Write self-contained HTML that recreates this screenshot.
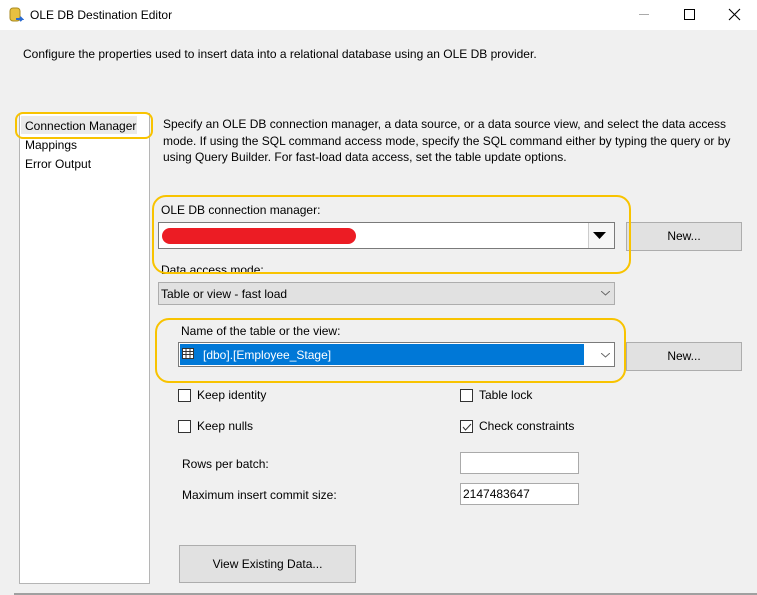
<!DOCTYPE html>
<html><head><style>
*{margin:0;padding:0;box-sizing:border-box}
body{width:757px;height:595px;background:#f0f0f0;font-family:"Liberation Sans",sans-serif;font-size:12px;color:#000;position:relative;overflow:hidden}
.a{position:absolute;white-space:nowrap}
.btn{position:absolute;background:#e1e1e1;border:1px solid #adadad;text-align:center}
.cb{position:absolute;width:13px;height:13px;border:1px solid #333;background:#fff}
.tb{position:absolute;background:#fff;border:1px solid #7a7a7a}
.ring{position:absolute;border:2px solid #f8c300;border-radius:14px}
</style></head><body>
<div class="a" style="left:0;top:0;width:757px;height:30px;background:#fff"></div>
<svg class="a" style="left:8px;top:6px" width="16" height="18"><rect x="2" y="2" width="10" height="13" rx="3" fill="#e8c040" stroke="#a88a20"/><path d="M8 13h6l-2-2M14 13l-2 2" stroke="#2a6ad0" stroke-width="2" fill="none"/></svg>
<div class="a" style="left:30px;top:8px;font-size:12px">OLE DB Destination Editor</div>
<div class="a" style="left:639px;top:14px;width:10px;height:1px;background:#aaa"></div>
<div class="a" style="left:684px;top:9px;width:11px;height:11px;border:1px solid #000"></div>
<svg class="a" style="left:728px;top:8px" width="13" height="13"><path d="M1 1L12 12M12 1L1 12" stroke="#000" stroke-width="1.1"/></svg>
<div class="a" style="left:23px;top:47px">Configure the properties used to insert data into a relational database using an OLE DB provider.</div>

<div class="a" style="left:19px;top:113px;width:131px;height:471px;background:#fff;border:1px solid #b5b5b5"></div>
<div class="a" style="left:21px;top:116px;width:116px;height:18px;background:#eaeaea"></div>
<div class="a" style="left:25px;top:119px">Connection Manager</div>
<div class="a" style="left:25px;top:138px">Mappings</div>
<div class="a" style="left:25px;top:157px">Error Output</div>
<div class="ring" style="left:15px;top:112px;width:138px;height:27px;border-radius:8px"></div>

<div class="a" style="left:163px;top:116px;line-height:16.5px">Specify an OLE DB connection manager, a data source, or a data source view, and select the data access<br>mode. If using the SQL command access mode, specify the SQL command either by typing the query or by<br>using Query Builder. For fast-load data access, set the table update options.</div>

<div class="a" style="left:161px;top:203px">OLE DB connection manager:</div>
<div class="tb" style="left:158px;top:222px;width:457px;height:27px"></div>
<div class="a" style="left:162px;top:228px;width:194px;height:16px;background:#ec1c24;border-radius:8px"></div>
<div class="a" style="left:588px;top:223px;width:26px;height:25px;border-left:1px solid #ccc;background:#f6f6f6"></div>
<svg class="a" style="left:593px;top:232px" width="14" height="8"><path d="M0 0H13L6.5 7Z" fill="#000"/></svg>
<div class="btn" style="left:626px;top:222px;width:116px;height:29px;line-height:27px">New...</div>
<div class="a" style="left:161px;top:263px">Data access mode:</div>
<div class="ring" style="left:152px;top:195px;width:479px;height:79px"></div>

<div class="a" style="left:158px;top:282px;width:457px;height:23px;background:#e1e1e1;border:1px solid #adadad"></div>
<div class="a" style="left:161px;top:287px">Table or view - fast load</div>
<svg class="a" style="left:601px;top:291px" width="9" height="5"><path d="M0 0L4.5 4L9 0" stroke="#666" fill="none"/></svg>

<div class="a" style="left:181px;top:324px">Name of the table or the view:</div>
<div class="tb" style="left:178px;top:342px;width:437px;height:25px"></div>
<div class="a" style="left:180px;top:344px;width:404px;height:21px;background:#0078d7"></div>
<svg class="a" style="left:182px;top:348px" width="12" height="11"><rect x="0.5" y="0.5" width="11" height="10" fill="#fff" stroke="#333"/><path d="M0 3.5H12M0 6.5H12M4 0V11M8 0V11" stroke="#333"/></svg>
<div class="a" style="left:203px;top:348px;color:#fff">[dbo].[Employee_Stage]</div>
<svg class="a" style="left:601px;top:353px" width="9" height="5"><path d="M0 0L4.5 4L9 0" stroke="#666" fill="none"/></svg>
<div class="btn" style="left:626px;top:342px;width:116px;height:29px;line-height:27px">New...</div>
<div class="ring" style="left:155px;top:318px;width:471px;height:65px"></div>

<div class="cb" style="left:178px;top:389px"></div><div class="a" style="left:197px;top:388px">Keep identity</div>
<div class="cb" style="left:460px;top:389px"></div><div class="a" style="left:479px;top:388px">Table lock</div>
<div class="cb" style="left:178px;top:420px"></div><div class="a" style="left:197px;top:419px">Keep nulls</div>
<div class="cb" style="left:460px;top:420px"></div>
<svg class="a" style="left:462px;top:423px" width="10" height="8"><path d="M1 4L3.5 7L9 1" stroke="#333" fill="none"/></svg>
<div class="a" style="left:479px;top:419px">Check constraints</div>

<div class="a" style="left:182px;top:457px">Rows per batch:</div>
<div class="tb" style="left:460px;top:452px;width:119px;height:22px;border-color:#aaa"></div>
<div class="a" style="left:182px;top:488px">Maximum insert commit size:</div>
<div class="tb" style="left:460px;top:483px;width:119px;height:22px;border-color:#aaa"></div>
<div class="a" style="left:463px;top:487px">2147483647</div>

<div class="btn" style="left:179px;top:545px;width:177px;height:38px;line-height:36px">View Existing Data...</div>
<div class="a" style="left:14px;top:593px;width:743px;height:2px;background:#a0a0a0"></div>
</body></html>
